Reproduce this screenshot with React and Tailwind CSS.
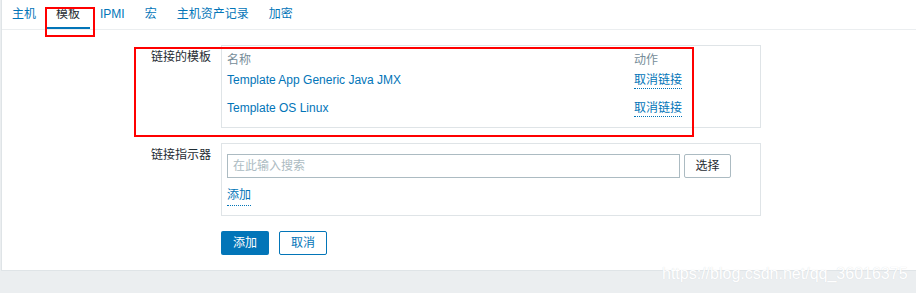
import React from 'react';

const tabs = ['主机', '模板', 'IPMI', '宏', '主机资产记录', '加密'];

const templates = [
    { name: 'Template App Generic Java JMX' },
    { name: 'Template OS Linux' },
];

function FormRow({ label, children }) {
    return (
        <div className="flex">
            <div className="w-[219px] shrink-0 pr-[10px] pt-[5px] text-right leading-[14px] text-[#1f2c33]">{label}</div>
            <div className="w-[540px] border border-[#dfe4e7]">{children}</div>
        </div>
    );
}

export default function App() {
    return (
        <div
            className="relative h-[293px] w-[916px] overflow-hidden bg-[#ebeef0] pl-px text-[12px]"
            style={{ fontFamily: '"Liberation Sans", "Noto Sans CJK SC", sans-serif' }}
        >
            <div className="h-[271px] border-b border-l border-[#dfe4e7] bg-white">
                {/* tabs */}
                <div className="flex h-[30px] border-b border-[#ebeef0]">
                    {tabs.map((t, i) => (
                        <div
                            key={t}
                            className={
                                i === 1
                                    ? 'flex h-[29px] items-center border-b-2 border-[#0275b8] px-[10px] pt-[1px] text-[#1f2c33]'
                                    : 'flex h-[29px] items-center border-b-2 border-transparent px-[10px] pt-[1px] text-[#0275b8]'
                            }
                        >
                            {t}
                        </div>
                    ))}
                </div>

                <div className="flex flex-col gap-[15px] pt-[15px]">
                    <FormRow label="链接的模板">
                        <div className="px-[5px] py-[5px]">
                            <div className="grid h-[15px] grid-cols-[407px_1fr] items-center text-[#768d99]">
                                <span>名称</span>
                                <span>动作</span>
                            </div>
                            {templates.map((t) => (
                                <div key={t.name} className="grid h-[28px] grid-cols-[407px_1fr] items-center">
                                    <span className="text-[#0275b8]">{t.name}</span>
                                    <span>
                                        <span className="border-b border-dotted border-[#0275b8] pb-[1px] text-[#0275b8]">取消链接</span>
                                    </span>
                                </div>
                            ))}
                        </div>
                    </FormRow>

                    <FormRow label="链接指示器">
                        <div className="px-[5px] pb-[11px] pt-[10px]">
                            <div className="flex gap-[4px]">
                                <div className="flex h-[24px] w-[453px] items-center border border-[#acbbc2] px-[5px] text-[#acbbc2]">
                                    在此输入搜索
                                </div>
                                <div className="flex h-[24px] w-[47px] items-center justify-center rounded-[2px] border border-[#acbbc2] text-[#1f2c33]">
                                    选择
                                </div>
                            </div>
                            <div className="mt-[10px] flex h-[16px] items-center">
                                <span className="border-b border-dotted border-[#0275b8] pb-[1px] text-[#0275b8]">添加</span>
                            </div>
                        </div>
                    </FormRow>

                    <div className="flex gap-[10px] pl-[219px]">
                        <div className="flex h-[24px] w-[48px] items-center justify-center rounded-[2px] bg-[#0275b8] text-white">添加</div>
                        <div className="flex h-[24px] w-[48px] items-center justify-center rounded-[2px] border border-[#0275b8] text-[#0275b8]">取消</div>
                    </div>
                </div>
            </div>

            {/* annotation boxes */}
            <div className="absolute left-[45px] top-[7px] h-[30px] w-[50px] border-2 border-[#ff0000]" />
            <div className="absolute left-[134px] top-[47px] h-[90px] w-[560px] border-2 border-[#ff0000]" />

            {/* watermark */}
            <div
                className="absolute left-[662px] top-[264px] text-[16px] leading-[20px] text-white"
                style={{ textShadow: '0 0 1px #d4d8dc' }}
            >
                https://blog.csdn.net/qq_36016375
            </div>
        </div>
    );
}
